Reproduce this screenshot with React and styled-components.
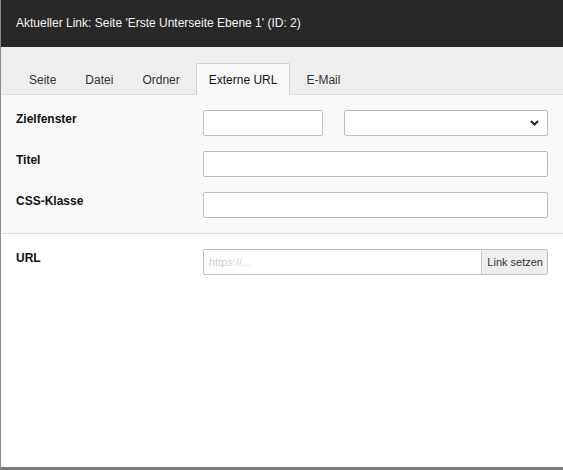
import React from "react";
import styled, { createGlobalStyle } from "styled-components";

const Global = createGlobalStyle`
  * { box-sizing: border-box; }
  html, body { margin: 0; padding: 0; background: #fff; }
  body { font-family: "Liberation Sans", Arial, sans-serif; }
`;

const Page = styled.div`
  width: 563px;
  height: 470px;
  display: flex;
  flex-direction: column;
  border-left: 1px solid #8a8a8a;
  border-bottom: 3px solid #7c7c7c;
  background: #fff;
  overflow: hidden;
`;

const Header = styled.div`
  height: 47px;
  flex: none;
  display: flex;
  align-items: center;
  padding: 0 15px 1px;
  background: #282828;
  color: #f4f4f4;
  font-size: 12px;
`;

const TabBar = styled.div`
  flex: none;
  display: flex;
  gap: 3px;
  padding: 16px 15px 0;
  background: #eeeeee;
  border-bottom: 1px solid #dcdcdc;
`;

const Tab = styled.div`
  height: 32px;
  margin-bottom: -1px;
  padding: 0 12px;
  display: flex;
  align-items: center;
  font-size: 12px;
  color: ${(p) => (p.$active ? "#111" : "#333")};
  background: ${(p) => (p.$active ? "#f9f9f9" : "transparent")};
  border: 1px solid ${(p) => (p.$active ? "#cfcfcf" : "transparent")};
  border-bottom: none;
  border-radius: 2px 2px 0 0;
`;

const Section = styled.div`
  display: flex;
  flex-direction: column;
  gap: 15px;
  padding: 15px 15px;
  background: ${(p) => (p.$shaded ? "#f9f9f9" : "#fff")};
  border-bottom: ${(p) => (p.$shaded ? "1px solid #dcdcdc" : "none")};
`;

const Row = styled.div`
  display: grid;
  grid-template-columns: 187px 1fr;
  align-items: start;
`;

const Label = styled.div`
  padding-top: 2px;
  line-height: 14px;
  font-size: 12px;
  font-weight: bold;
  color: #111;
`;

const Fields = styled.div`
  display: flex;
  gap: 21px;
`;

const TextInput = styled.input`
  height: 26px;
  width: ${(p) => p.$width || "100%"};
  flex: ${(p) => (p.$width ? "none" : "1")};
  padding: 0 5px;
  border: 1px solid #bdbdbd;
  border-radius: 2px;
  background: #fff;
  font-family: "Liberation Sans", Arial, sans-serif;
  font-size: 11px;
  color: #333;
  outline: none;
  &::placeholder { color: #cfcfcf; }
`;

const SelectBox = styled.div`
  flex: 1;
  height: 26px;
  display: flex;
  align-items: center;
  justify-content: flex-end;
  padding-right: 8px;
  border: 1px solid #bdbdbd;
  border-radius: 2px;
  background: #fff;
`;

const Group = styled.div`
  display: flex;
  height: 26px;
  border: 1px solid #bdbdbd;
  border-radius: 2px;
  overflow: hidden;
`;

const GroupInput = styled(TextInput)`
  height: 24px;
  border: none;
  border-radius: 0;
`;

const GroupButton = styled.button`
  flex: none;
  height: 24px;
  padding: 0 4px 0 5px;
  border: none;
  border-left: 1px solid #c8c8c8;
  background: #eeeeee;
  font-family: "Liberation Sans", Arial, sans-serif;
  font-size: 11px;
  color: #333;
`;

const Chevron = () => (
  <svg width="9" height="6" viewBox="0 0 9 6">
    <path d="M1 1 L4.5 4.5 L8 1" fill="none" stroke="#222" strokeWidth="2" />
  </svg>
);

export default function App() {
  const tabs = ["Seite", "Datei", "Ordner", "Externe URL", "E-Mail"];
  return (
    <>
      <Global />
      <Page>
        <Header>Aktueller Link: Seite 'Erste Unterseite Ebene 1' (ID: 2)</Header>
        <TabBar>
          {tabs.map((t) => (
            <Tab key={t} $active={t === "Externe URL"}>
              {t}
            </Tab>
          ))}
        </TabBar>
        <Section $shaded>
          <Row>
            <Label>Zielfenster</Label>
            <Fields>
              <TextInput $width="120px" />
              <SelectBox>
                <Chevron />
              </SelectBox>
            </Fields>
          </Row>
          <Row>
            <Label>Titel</Label>
            <TextInput />
          </Row>
          <Row>
            <Label>CSS-Klasse</Label>
            <TextInput />
          </Row>
        </Section>
        <Section>
          <Row>
            <Label>URL</Label>
            <Group>
              <GroupInput placeholder="https://..." />
              <GroupButton>Link setzen</GroupButton>
            </Group>
          </Row>
        </Section>
      </Page>
    </>
  );
}
